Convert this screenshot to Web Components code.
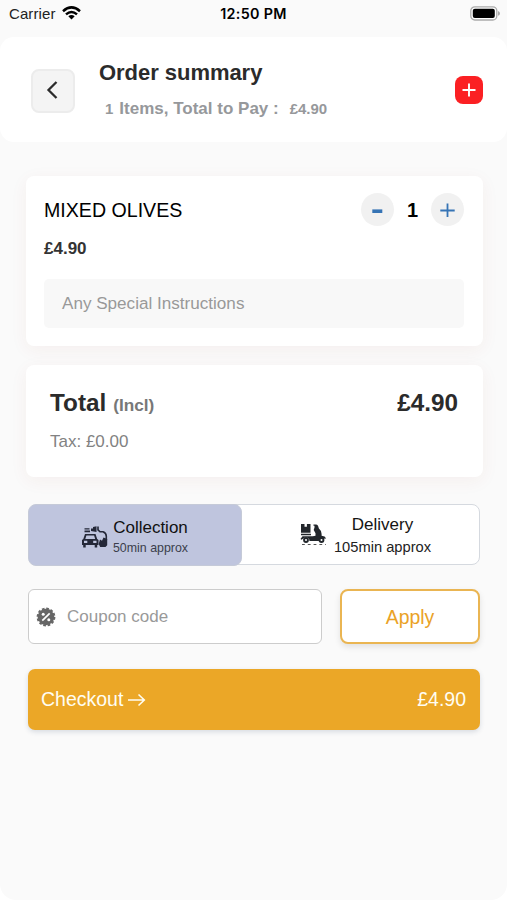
<!DOCTYPE html>
<html lang="en">
<head>
<meta charset="utf-8">
<title>Order summary</title>
<style>
html,body{margin:0;height:100%;background:#fff}
body{font-family:"Liberation Sans",Arial,sans-serif;color:#000;overflow:hidden}
</style>
</head>
<body>
<order-screen></order-screen>
<script>
function define(name, css, html) {
  customElements.define(name, class extends HTMLElement {
    constructor() {
      super();
      this.attachShadow({ mode: "open" }).innerHTML =
        `<style>*{box-sizing:border-box}:host{box-sizing:border-box;display:block}${css}</style>${html}`;
    }
  });
}

define("status-bar", `
  :host{display:grid;grid-template-columns:1fr auto 1fr;align-items:center;height:28px;padding:0 7px 0 9px;font-size:15px}
  .l{display:flex;align-items:center;gap:6px;letter-spacing:.1px;color:#222}
  .l span{line-height:18px;padding-bottom:1px}
  .l svg{margin-top:-2px}
  b{font:600 14.3px/28px Inter,sans-serif;letter-spacing:.35px;margin-left:-2px}
  .r{display:flex;justify-content:flex-end;margin-top:-2px}
  svg{display:block}`, `
  <div class="l"><span>Carrier</span>
    <svg width="19" height="14" viewBox="0 0 19 14" fill="none" stroke="#000" stroke-width="2.5"><path d="M1 5.2Q9.500-2.400 18 5.200M4 8.400Q9.500 3.600 15 8.400"/><path d="M6.300 10.300Q9.500 7.500 12.700 10.300L9.500 13.600z" fill="#000" stroke="none"/></svg></div>
  <b>12:50 PM</b>
  <div class="r"><svg width="30" height="15" viewBox="0 0 30 15"><rect x=".8" y=".8" width="26" height="13.200" rx="4" fill="#fff" stroke="#aaa" stroke-width="1.300"/><rect x="2.800" y="2.800" width="22" height="9.200" rx="2" fill="#000"/><path d="M28 5q2 .7 2 2.400t-2 2.400z" fill="#aaa"/></svg></div>`);

define("order-header", `
  :host{display:flex;align-items:center;height:105px;padding:2px 24px 0 31px;background:#fff;border-radius:14px}
  .back{width:44px;height:44px;border:2px solid #ececec;border-radius:8px;background:#f4f4f4;display:grid;place-items:center}
  .t{flex:1;margin-left:24px;height:71px}
  h1{margin:0;font-size:22px;line-height:36px;letter-spacing:-.04px;color:#2b2b2b}
  p{margin:0 0 0 6px;font-weight:bold;font-size:17px;line-height:36px;color:#96989b;white-space:pre}
  small{font-size:15px}
  .add{width:28px;height:28px;margin-top:-2px;border-radius:8px;background:#fb2023;display:grid;place-items:center}
  .back svg{margin:-2px 0 0 -2px}
  svg{display:block}`, `
  <div class="back"><svg width="14" height="20" viewBox="0 0 14 20" fill="none" stroke="#2b2b2b" stroke-width="2.300"><path d="M11.500 2L3.500 10l8 8"/></svg></div>
  <div class="t"><h1>Order summary</h1><p><small>1</small><span style="margin-left:6px">Items, Total to Pay :</span><small style="margin-left:11px">£4.90</small></p></div>
  <div class="add"><svg width="16" height="16" viewBox="0 0 16 16" stroke="#fff" stroke-width="1.900"><path d="M8 1.500v13M1.500 8h13"/></svg></div>`);

define("surface-card", `
  :host{background:#fff;border-radius:8px;box-shadow:0 4px 18px rgba(160,60,30,.055)}`, `<slot></slot>`);

define("quantity-stepper", `
  :host{display:flex;align-items:center}
  i{width:33px;height:33px;border-radius:50%;background:#f1f1f1;display:grid;place-items:center}
  b{width:37px;text-align:center;font-size:20px;padding-top:1px}
  svg{display:block}`, `
  <i><svg width="15" height="15" viewBox="0 0 15 15" stroke="#3674b5" stroke-width="3.600"><path d="M2.300 9.200h10"/></svg></i><b>1</b>
  <i><svg width="15" height="15" viewBox="0 0 15 15" stroke="#3674b5" stroke-width="1.800"><path d="M7.500 1.500v14M.3 8.500h14.400"/></svg></i>`);

define("order-item", `
  :host{padding:17px 19px 18px 18px;height:170px}
  .row{display:flex;justify-content:space-between;align-items:center;height:33px;font-size:19.600px}
  .row span{padding-top:2px}
  .price{font-size:17px;line-height:24px;font-weight:bold;color:#333;margin:11px 0 18px}
  .note{height:49px;border-radius:5px;background:#f8f8f8;color:#999;font-size:17.100px;line-height:49px;padding-left:18px}`, `
  <div class="row"><span>MIXED OLIVES</span><quantity-stepper></quantity-stepper></div>
  <div class="price">£4.90</div><div class="note">Any Special Instructions</div>`);

define("order-total", `
  :host{padding:20px 25px 0 24px;height:112px}
  .row{display:flex;justify-content:space-between;font-weight:bold;font-size:24.300px;line-height:36px;color:#2b2b2b}
  small{font-size:17.200px;color:#777;margin-left:7px}
  .tax{font-size:17px;line-height:24px;margin-top:7px;color:#828282}`, `
  <div class="row"><span>Total<small>(Incl)</small></span><span>£4.90</span></div><div class="tax">Tax: £0.00</div>`);

define("method-option", `
  :host{display:flex;align-items:center;justify-content:center;gap:5px}
  .txt{display:flex;flex-direction:column;align-items:center;font-size:17px;line-height:20px}
  ::slotted(small){font-size:var(--sub,14.700px);line-height:20px;margin-top:var(--gap,2px);color:var(--subc,#222)}
  ::slotted(svg){display:block}`, `
  <slot name="icon"></slot><div class="txt"><slot></slot><slot name="eta"></slot></div>`);

define("method-picker", `
  :host{display:flex;height:62px}
  .c{width:214px;background:#bfc5de;border:1px solid #c5cad8;border-radius:8px;--sub:12.400px;--subc:#3b3e4c;--gap:0px;padding:5px 0 0;color:#111;position:relative;z-index:1}
  .d{width:246px;height:61px;margin-left:-8px;padding:2px 0 0 17px;background:#fff;border:1px solid #d5d9df;border-radius:0 8px 8px 0;color:#151515}`, `
  <method-option class="c"><svg slot="icon" width="26" height="24" viewBox="0 0 26 24" style="margin-top:-1px">
    <g fill="#242838"><path d="M2.500 3.300h5v1.300h-5zM2.500 5.600h5.500v1.600H2.500zM9 3.500h2V2l3.500-.8V7L9 6z"/>
    <path fill-rule="evenodd" d="M3 9h10.500l1.700 5 1.300 1v5h-1.300v2.500h-2.500V20h-9v2.500H1.200V20H0v-5l1.300-1zM4.400 10.500L3.300 14h9.900l-1.100-3.500zM2 15.800v2.200h3.300v-2.200zM11.200 15.800v2.200h3.300v-2.200z"/>
    <path d="M18 14.500l2 1.200 1.500-3.200 3.700 1.500v6.300l-1.700 1.700h-5.300l-1.500-3z"/></g>
    <path d="M16 1.500v3.300l2 2h3q3.300 1.200 3.300 4.500v4" fill="none" stroke="#242838" stroke-width="1.600"/></svg>Collection<small slot="eta">50min approx</small></method-option>
  <method-option class="d"><svg slot="icon" width="27" height="23" viewBox="0 0 27 23" style="margin:-3px 2px 0 0">
    <g fill="#22262b"><path d="M1 1h3.500v2.700h2.400V1h3.600v8.700H1zM1 10.700h10v1.600H1zM2.500 13.300h10.300l2.700-.5v-2.500L13.700 7l.8-2.500V2.800h-1V1.400h2.700q1.500.3 2 1.800l.7 2.300q2.600 2 2.700 5.500v1.800l3 .7 1.500 2-3 .2a3.300 3.300 0 0 0-4.300 2.300H9.500A3.500 3.500 0 0 0 4 15l-2.500 1.800-1-.8z"/><circle cx="6" cy="17" r="2.900"/><circle cx="21.500" cy="17" r="2.900"/></g>
    <g fill="#fff"><circle cx="6" cy="17" r="1"/><circle cx="21.500" cy="17" r="1"/></g><path d="M2 21.500h24" stroke="#555" stroke-width="1.200" stroke-dasharray="2.800 3"/></svg>Delivery<small slot="eta">105min approx</small></method-option>`);

define("coupon-form", `
  :host{display:flex;gap:18px;height:55px}
  .in{width:294px;border:1px solid #ccc;border-radius:6px;background:#fff;display:flex;align-items:center;padding-left:7px;gap:11px;color:#999;font-size:17px}
  .in span{padding-top:1px}
  .ap{flex:1;border:2px solid #eab552;border-radius:8px;background:#fff;color:#eaa226;font-size:19.400px;display:grid;place-items:center;padding-top:1px;box-shadow:0 3px 6px rgba(0,0,0,.1)}
  svg{display:block}`, `
  <div class="in"><svg width="20" height="20" viewBox="0 0 20 20"><circle cx="10" cy="10" r="8.300" fill="#666"/><circle cx="10" cy="10" r="8.500" fill="none" stroke="#666" stroke-width="1.800" stroke-dasharray="2.700 1.750"/><path d="M6.300 13.700l7.400-7.400" stroke="#fff" stroke-width="1.700"/><circle cx="7.200" cy="7.300" r="1.500" fill="#fff"/><circle cx="12.800" cy="12.700" r="1.500" fill="#fff"/></svg><span>Coupon code</span></div>
  <div class="ap">Apply</div>`);

define("checkout-button", `
  :host{display:flex;align-items:center;justify-content:space-between;height:61px;padding:0 14px 0 13px;border-radius:7px;background:#eba727;color:#fffdf2;font-size:19.500px;box-shadow:0 2px 5px rgba(40,60,100,.16)}
  span{display:flex;align-items:center;gap:5px}`, `
  <span>Checkout<svg width="18" height="14" viewBox="0 0 18 14" fill="none" stroke="#fffdf2" stroke-width="1.600"><path d="M0 7h16M10.500 1.500L16.300 7l-5.800 5.500"/></svg></span><span>£4.90</span>`);

define("order-screen", `
  :host{height:900px;background:#fafafa;border-radius:0 0 16px 16px;display:flex;flex-direction:column}
  order-header{margin-top:9px}
  main{display:flex;flex-direction:column;padding:34px 24px 0 26px}
  .tot{margin-top:19px}
  .f{margin:27px 3px 0 2px;display:flex;flex-direction:column}
  coupon-form{margin-top:23px}
  checkout-button{margin-top:25px}`, `
  <status-bar></status-bar><order-header></order-header>
  <main><surface-card><order-item></order-item></surface-card>
  <surface-card class="tot"><order-total></order-total></surface-card>
  <div class="f"><method-picker></method-picker><coupon-form></coupon-form><checkout-button></checkout-button></div></main>`);
</script>
</body>
</html>
